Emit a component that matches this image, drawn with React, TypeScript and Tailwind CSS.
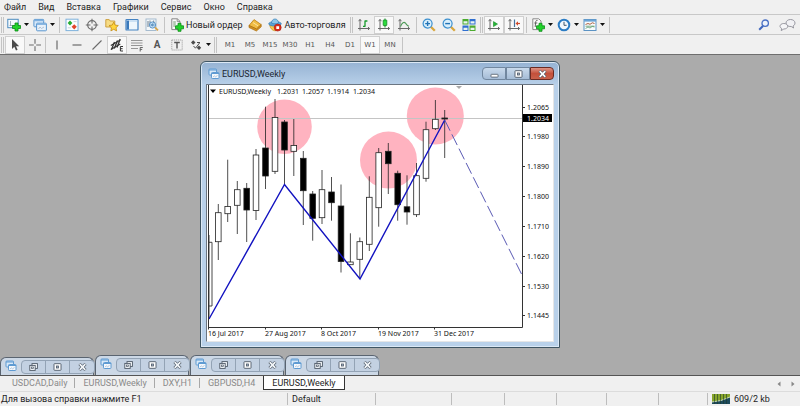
import type { ReactNode } from "react";

/* ---------- icons ---------- */

function Svg({ children, w = 14, h = 14 }: { children: ReactNode; w?: number; h?: number }) {
  return (
    <svg width={w} height={h} viewBox={`0 0 ${w} ${h}`} fill="none" className="shrink-0" aria-hidden="true">
      {children}
    </svg>
  );
}

const GreenPlus = ({ x, y }: { x: number; y: number }) => (
  <path
    transform={`translate(${x} ${y})`}
    d="M3 .5h3V3h2.5v3H6v2.500H3V6H.5V3H3z"
    fill="#22d32b"
    stroke="#0b8a16"
    strokeWidth=".8"
  />
);

const NewChartIcon = () => (
  <Svg>
    <rect x=".8" y="1.3" width="10.4" height="8.4" fill="#f4f9fd" stroke="#4d8cbf" />
    <path d="M2.5 7.5h7M3.5 3v5" stroke="#8a9aa8" strokeWidth=".8" />
    <GreenPlus x={5} y={4.5} />
  </Svg>
);

const ProfilesIcon = () => (
  <Svg>
    <rect x=".9" y="1.4" width="9.8" height="7.4" rx=".8" fill="#d7e8f8" stroke="#5b97d0" />
    <path d="M1 2.4h9.6" stroke="#7fb0df" strokeWidth="1.6" />
    <rect x="3.6" y="5.2" width="9.8" height="7.6" rx=".8" fill="#e8f1fa" stroke="#5b97d0" />
    <path d="M4 6.2h9" stroke="#7fb0df" strokeWidth="1.4" />
    <path d="M5.500 11l1.500-2 1.500 1.500L11 9" stroke="#a4b8cc" strokeWidth=".8" />
  </Svg>
);

const MarketWatchIcon = () => (
  <Svg>
    <rect x="1" y="1.2" width="12" height="11.4" fill="#fbfdff" stroke="#7fb2dc" />
    <path d="M5 2.6L7.4 5 5 7.4 2.6 5z" fill="#27ad34" />
    <path d="M9.2 6.2l2.6 2.6-2.6 2.6-2.6-2.6z" fill="#e2472c" />
    <path d="M8.5 3.6h3M2.8 9.8h3" stroke="#b9c6d2" strokeWidth=".8" />
  </Svg>
);

const DataWindowIcon = () => (
  <Svg>
    <circle cx="7" cy="7" r="4.300" stroke="#6d6d6d" strokeWidth="1.200" />
    <path d="M7 .8v4.700M7 8.500v4.700M.8 7h4.700M8.500 7h4.700" stroke="#6d6d6d" strokeWidth="1.100" />
  </Svg>
);

const NavigatorIcon = () => (
  <Svg>
    <path d="M.8 1.6h3.4l1 1.4h4.6v6H.8z" fill="#f7dc85" stroke="#c99b35" strokeWidth=".9" />
    <path
      d="M8.7 4.2l1.4 2.9 3.2.4-2.3 2.2.6 3.2-2.9-1.6-2.8 1.6.5-3.2L4 7.5l3.2-.4z"
      fill="#ffd43b"
      stroke="#c48d16"
      strokeWidth=".8"
    />
  </Svg>
);

const TerminalIcon = () => (
  <Svg>
    <rect x="1" y="1.5" width="12" height="10.5" rx=".6" fill="#eef6fc" stroke="#4583c2" strokeWidth="1.2" />
    <path d="M1.6 2.5h2.4v9H1.6z" fill="#3a79bb" />
    <path d="M4 3h8.6" stroke="#a9cbea" />
  </Svg>
);

const TesterIcon = () => (
  <Svg>
    <rect x="1" y="1" width="10" height="11.5" fill="#f4f8fb" stroke="#9db5ca" strokeWidth=".9" />
    <path d="M3 3v6M5 2.5V6M8.7 2.5v3" stroke="#6e7e8d" />
    <circle cx="7.5" cy="7" r="3.1" fill="#b9daf5" fillOpacity=".85" stroke="#5b93c6" strokeWidth="1" />
    <path d="M6.3 8V6M7.6 8.4V5.4M8.8 7.8V6.2" stroke="#4078aa" strokeWidth=".8" />
    <path d="M10 9.4l3 3" stroke="#d8a54a" strokeWidth="1.8" />
  </Svg>
);

const OrderIcon = () => (
  <Svg>
    <path d="M1.8.8h5.6L10 3.4v8.2H1.8z" fill="#fafafa" stroke="#7c7c7c" strokeWidth=".9" />
    <path d="M7.2 1v2.6H10" stroke="#7c7c7c" strokeWidth=".8" />
    <path d="M3.2 4h2.6M3.2 6h2.6M3.2 8h2" stroke="#5c8a5c" strokeWidth=".9" />
    <GreenPlus x={5} y={4.8} />
  </Svg>
);

const EditorIcon = () => (
  <Svg>
    <path d="M1 7.5L6 1.6l7.2 5L8.6 11z" fill="#f0bd45" stroke="#b87d17" strokeWidth=".8" />
    <path d="M1 7.5v2l7.4 3.5 4.8-4.2V6.6L8.6 11z" fill="#d6941f" stroke="#a66b10" strokeWidth=".7" />
    <path d="M5 4.6l5 3.2" stroke="#fbe39d" />
  </Svg>
);

const AutoTradeIcon = () => (
  <Svg>
    <path d="M1.6 7.2c1 3.6 3 5.6 5.5 5.6 2.6 0 4.6-2.6 5.2-5.6z" fill="#f5c94d" stroke="#c9932a" strokeWidth=".7" />
    <ellipse cx="7" cy="5.8" rx="6.3" ry="2.3" fill="#5da3d6" stroke="#357cb4" strokeWidth=".7" />
    <path d="M3.4 5C3.8 2.2 5.2 1 7 1s3.2 1.2 3.6 4c-2 1.1-5.2 1.1-7.2 0z" fill="#8cc6ea" stroke="#357cb4" strokeWidth=".7" />
    <circle cx="9.7" cy="9.6" r="3.5" fill="#da2d1b" stroke="#a91c10" strokeWidth=".6" />
    <rect x="8.3" y="8.2" width="2.8" height="2.8" fill="#fff" />
  </Svg>
);

const Axes = () => (
  <path
    d="M3 1.5v11M1 10.5h11.5M1.6 3.2L3 1.4l1.4 1.8M11 9.1l1.6 1.4-1.6 1.4"
    stroke="#686868"
    strokeWidth="1"
  />
);

const BarsIcon = () => (
  <Svg>
    <Axes />
    <path d="M8 2.500v6.300M8 3h2.400M6 8.300h2" stroke="#169a2b" strokeWidth="1.300" />
  </Svg>
);

const CandlesIcon = () => (
  <Svg>
    <Axes />
    <path d="M8 .5v9" stroke="#148a24" />
    <rect x="6.2" y="2" width="3.6" height="5.6" rx=".5" fill="#2bdc3c" stroke="#148a24" strokeWidth=".8" />
  </Svg>
);

const LineIcon = () => (
  <Svg>
    <Axes />
    <path d="M3.500 8.500C5 4.500 7 3.500 8.500 5.200S10.500 8 12 8.300" stroke="#4d9a57" strokeWidth="1.100" />
  </Svg>
);

const ZoomIcon = ({ plus }: { plus?: boolean }) => (
  <Svg>
    <path d="M8.800 8.800l4 4" stroke="#d9a63c" strokeWidth="2.300" />
    <circle cx="5.600" cy="5.600" r="4.500" fill="#d9effc" stroke="#3b8fce" strokeWidth="1.200" />
    <path d={plus ? "M3.200 5.600H8M5.600 3.200V8" : "M3.200 5.600H8"} stroke="#2273b5" strokeWidth="1.400" />
  </Svg>
);

const TileIcon = () => (
  <Svg>
    <rect x=".5" y="1" width="6" height="5.500" fill="#4cab2f" />
    <rect x="7.500" y="1" width="6" height="5.500" fill="#2f6fd0" />
    <rect x=".5" y="7.500" width="6" height="5.500" fill="#2f6fd0" />
    <rect x="7.500" y="7.500" width="6" height="5.500" fill="#4cab2f" />
    <path d="M1.500 3.200h4v2.300h-4zM8.500 3.200h4v2.300h-4zM1.500 9.700h4V12h-4zM8.500 9.700h4V12h-4z" fill="#e9f5ef" />
  </Svg>
);

const AutoScrollIcon = () => (
  <Svg>
    <Axes />
    <path d="M6.500 3.600v5l4-2.500z" fill="#25b737" stroke="#148a24" strokeWidth=".6" />
  </Svg>
);

const ShiftIcon = () => (
  <Svg>
    <Axes />
    <path d="M7.500 1.500v7.500" stroke="#45719c" strokeWidth="1.200" />
    <path d="M8.500 5.500l2.500-2.200v4.400z" fill="#cf4a2a" />
    <path d="M10.500 5.500H13" stroke="#cf4a2a" strokeWidth="1.200" />
  </Svg>
);

const IndicatorsIcon = () => (
  <Svg>
    <path d="M1.800.8h6L10 3v8.600H1.800z" fill="#fafafa" stroke="#808080" strokeWidth=".9" />
    <path d="M6.500 2.500c-1.500-.4-1.800.7-1.900 2L4.200 9M3.300 5h3" stroke="#555" strokeWidth=".9" />
    <GreenPlus x={5} y={4.800} />
  </Svg>
);

const ClockIcon = () => (
  <Svg>
    <circle cx="7" cy="7" r="5.300" fill="#f1f8fd" stroke="#2a7cc4" strokeWidth="2" />
    <path d="M7 3.800V7.300h2.600" stroke="#42566a" strokeWidth="1" />
  </Svg>
);

const TemplateIcon = () => (
  <Svg>
    <rect x="1" y="1.500" width="12" height="11" fill="#f8fbfd" stroke="#5c93c4" />
    <path d="M1 2.600h12" stroke="#6ba4d6" strokeWidth="2" />
    <path d="M2.500 6.500l2.500-1 2 .8 2.300-1.500 2.200.7" stroke="#a3502c" strokeWidth=".9" />
    <path d="M2.500 10.500l2.500-1.500 2 1 2.300-1.600 2.200.6M2.500 8.200h9" stroke="#5a9a6c" strokeWidth=".8" />
  </Svg>
);

const SearchIcon = () => (
  <Svg>
    <path d="M6 8L2.200 11.800" stroke="#3f66bd" strokeWidth="2" />
    <circle cx="8.200" cy="5.200" r="3.200" fill="#eef3fb" stroke="#4a70c4" strokeWidth="1.300" />
  </Svg>
);

const ChatIcon = () => (
  <Svg w={17} h={14}>
    <path
      d="M7 5c0-2 2-3.500 4.500-3.500S16 3 16 5c0 1.400-.8 2.400-2 3l.6 2-2.400-1.500C9.300 8.800 7 7.200 7 5z"
      fill="#f1f1f4"
      stroke="#8d8d97"
      strokeWidth=".9"
    />
    <path
      d="M1 8.300C1 6.600 2.700 5.500 4.800 5.500s3.900 1.100 3.900 2.800S7 11 4.800 11l-2.600 1.600.5-2.200C1.600 10 1 9.200 1 8.300z"
      fill="#f6f6f8"
      stroke="#8d8d97"
      strokeWidth=".9"
    />
  </Svg>
);

const CursorIcon = () => (
  <Svg>
    <path d="M4 1v10l2.300-2.200L8 12.500l1.600-.8L8 8.200h3.200z" fill="#4b4b4b" />
  </Svg>
);

const CrosshairIcon = () => (
  <Svg>
    <path d="M7 1v4.800M7 8.200V13M1 7h4.800M8.200 7H13" stroke="#6b6b6b" strokeWidth="1.100" />
  </Svg>
);

const VLineIcon = () => (
  <Svg>
    <path d="M7 2.500v9" stroke="#6b6b6b" strokeWidth="1.200" />
  </Svg>
);

const HLineIcon = () => (
  <Svg>
    <path d="M2.500 7h9" stroke="#6b6b6b" strokeWidth="1.200" />
  </Svg>
);

const TrendIcon = () => (
  <Svg>
    <path d="M2.500 11.500l9-9" stroke="#6b6b6b" strokeWidth="1.100" />
  </Svg>
);

const ChannelIcon = () => (
  <Svg>
    <path d="M.8 7.500l9.500-5.500M.8 11.500l9.500-5.500" stroke="#333" strokeWidth="1.200" />
    <path d="M1.500 11.500l3-7.500M4.300 10.500L7.500 2.500M7 9.500L10.200 1" stroke="#333" strokeWidth="1.300" />
    <path d="M13 8.500h-2.600V13H13M10.400 10.700h2.200" stroke="#333" />
  </Svg>
);

const FiboIcon = () => (
  <Svg>
    <path d="M1 2.500h11.500M1 5h11.500M1 7.500h11.500M1 10.500h7" stroke="#8a8a8a" strokeWidth=".9" />
    <path d="M12.800 9.500h-2.600v4M10.200 11.400h2" stroke="#555" strokeWidth=".9" />
  </Svg>
);

const LabelIcon = () => (
  <Svg>
    <rect x="1.800" y="2" width="10.400" height="10" stroke="#8c8c8c" strokeWidth=".9" strokeDasharray="1 1" />
    <path d="M4.200 4.500h5.600M7 4.500v6" stroke="#555" strokeWidth="1.400" />
  </Svg>
);

const ArrowsIcon = () => (
  <Svg>
    <path d="M4.200 2.200L6.500 4.500 4.200 6.800 2 4.500z" fill="#4b4b4b" />
    <path d="M10 7.600l2.200 2.200L10 12 7.800 9.800z" fill="#4b4b4b" />
    <path d="M4.500 8l2 2.200L10.500 5M8 4.500h3" stroke="#4b4b4b" strokeWidth="1" />
  </Svg>
);

const Caret = () => (
  <svg width="5" height="3" viewBox="0 0 5 3" className="shrink-0" aria-hidden="true">
    <path d="M0 0h5L2.500 3z" fill="#111" />
  </svg>
);

const SignalIcon = () => (
  <Svg w={18} h={10}>
    <rect width="18" height="10" fill="#1e4a5c" />
    <path d="M0 0h18v3L9 6.500 0 8z" fill="#87a52c" />
    <path d="M0 8l9-1.500L18 3" stroke="#d6e4c4" strokeWidth=".9" />
    <path d="M2.500 0v10M5.500 0v10M8.500 0v10M11.500 0v10M14.500 0v10" stroke="#1d3a2c" strokeWidth=".6" />
  </Svg>
);

/* ---------- toolbar parts ---------- */

const Grip = () => <span className="mx-px h-4 w-[3px] shrink-0 border-x border-x-[#c4c4c4]" />;
const Separator = () => <span className="mx-0.5 h-4 w-px shrink-0 bg-[#c4c4c4]" />;

interface ToolProps {
  label: string;
  children: ReactNode;
  active?: boolean;
  menu?: boolean;
}

function Tool({ label, children, active, menu }: ToolProps) {
  return (
    <button
      aria-label={label}
      className={`flex h-[18px] shrink-0 items-center justify-center gap-[3px] ${menu ? "w-[26px]" : "w-5"} ${
        active ? "border border-[#d0d0d0] bg-[#f9f9f9]" : ""
      }`}
    >
      {children}
      {menu && <Caret />}
    </button>
  );
}

const MENU = ["Файл", "Вид", "Вставка", "Графики", "Сервис", "Окно", "Справка"];
const PERIODS = ["M1", "M5", "M15", "M30", "H1", "H4", "D1", "W1", "MN"];
const CHART_TABS = ["USDCAD,Daily", "EURUSD,Weekly", "DXY,H1", "GBPUSD,H4", "EURUSD,Weekly"];

function MainToolbar() {
  return (
    <div className="flex h-5 items-center border-t border-[#c8c8c8] pr-1">
      <Grip />
      <Tool label="Новый график" menu><NewChartIcon /></Tool>
      <Tool label="Профили" menu><ProfilesIcon /></Tool>
      <Separator />
      <Tool label="Обзор рынка"><MarketWatchIcon /></Tool>
      <Tool label="Окно данных"><DataWindowIcon /></Tool>
      <Tool label="Навигатор"><NavigatorIcon /></Tool>
      <Tool label="Терминал"><TerminalIcon /></Tool>
      <Tool label="Тестер стратегий"><TesterIcon /></Tool>
      <Separator />
      <button className="flex items-center gap-0.5 px-[3px]">
        <OrderIcon />
        Новый ордер
      </button>
      <Tool label="Редактор"><EditorIcon /></Tool>
      <button className="flex items-center gap-0.5 px-[3px]">
        <AutoTradeIcon />
        Авто-торговля
      </button>
      <Grip />
      <Tool label="Бары"><BarsIcon /></Tool>
      <Tool label="Японские свечи" active><CandlesIcon /></Tool>
      <Tool label="Линия"><LineIcon /></Tool>
      <Separator />
      <Tool label="Увеличить"><ZoomIcon plus /></Tool>
      <Tool label="Уменьшить"><ZoomIcon /></Tool>
      <Tool label="Окна мозаикой"><TileIcon /></Tool>
      <Grip />
      <Tool label="Автопрокрутка" active><AutoScrollIcon /></Tool>
      <Tool label="Сдвиг графика" active><ShiftIcon /></Tool>
      <Separator />
      <Tool label="Индикаторы" menu><IndicatorsIcon /></Tool>
      <Tool label="Периоды" menu><ClockIcon /></Tool>
      <Tool label="Шаблоны" menu><TemplateIcon /></Tool>
      <Separator />
      <div className="ml-auto flex items-center gap-2">
        <button aria-label="Поиск"><SearchIcon /></button>
        <button aria-label="Чат"><ChatIcon /></button>
      </div>
    </div>
  );
}

function DrawToolbar() {
  return (
    <div className="flex h-5 items-center border-t border-[#c8c8c8]">
      <Grip />
      <Tool label="Курсор" active><CursorIcon /></Tool>
      <Tool label="Перекрестие"><CrosshairIcon /></Tool>
      <span className="h-4 w-0.5 shrink-0 border-l border-[#c4c4c4]" />
      <Tool label="Вертикальная линия"><VLineIcon /></Tool>
      <Tool label="Горизонтальная линия"><HLineIcon /></Tool>
      <Tool label="Трендовая линия"><TrendIcon /></Tool>
      <Tool label="Канал" active><ChannelIcon /></Tool>
      <Tool label="Фибоначчи"><FiboIcon /></Tool>
      <Tool label="Текст">
        <span className="text-[10px] font-bold text-[#555]">A</span>
      </Tool>
      <Tool label="Метка"><LabelIcon /></Tool>
      <Tool label="Стрелки" menu><ArrowsIcon /></Tool>
      <Grip />
      <div className="flex px-0.5">
        {PERIODS.map((p) => (
          <button
            key={p}
            className={`h-[18px] w-5 shrink-0 text-center font-['DejaVu_Sans'] text-[7px] text-[#555] ${
              p === "W1" ? "border border-[#d0d0d0] bg-[#f9f9f9]" : ""
            }`}
          >
            {p}
          </button>
        ))}
      </div>
      <span className="h-4 w-px bg-[#c4c4c4]" />
    </div>
  );
}

/* ---------- chart ---------- */

// x, high, low, body top, body bottom, filled
type Candle = [number, number, number, number, number, boolean];

const CANDLES: Candle[] = [
  [218.3, 204, 260, 212.7, 241.7, false],
  [227.7, 159.7, 222, 206.5, 213.7, false],
  [237.3, 181, 234, 189.7, 205.3, false],
  [246.7, 183, 242, 188.3, 210, true],
  [256, 149, 220, 155, 210.5, false],
  [265.5, 106.7, 189, 148, 176, true],
  [275, 99, 174, 117.5, 171.3, false],
  [284.5, 120, 185, 122, 150, true],
  [293.8, 119, 176, 145.5, 151.3, false],
  [303.3, 151, 225, 158.3, 190.7, true],
  [312.7, 191, 240.7, 194, 218.3, true],
  [322, 170, 224, 189.7, 217.7, false],
  [331.5, 177, 220.7, 192, 202.7, true],
  [341, 184.5, 272.5, 206, 261.5, true],
  [350.4, 233.3, 265, 262, 264.7, false],
  [359.8, 237.5, 279, 241.7, 259.3, false],
  [369.3, 176.3, 251, 197.3, 244.3, false],
  [378.7, 148, 226.7, 152.7, 207.7, false],
  [388.3, 143, 194, 151.3, 163.7, true],
  [397.7, 170.7, 220.7, 173.3, 204.7, true],
  [407, 175.3, 224.7, 206.8, 212, true],
  [416.5, 163, 217, 175.7, 214.7, false],
  [426, 121.7, 181.7, 129.7, 178.3, false],
  [435.4, 100, 130, 119.3, 128.7, false],
  [444.7, 110, 158, 118, 119, true],
];

const PRICES: [number, string][] = [
  [107, "1.2065"],
  [136, "1.1980"],
  [166, "1.1890"],
  [196, "1.1800"],
  [226, "1.1710"],
  [256, "1.1620"],
  [286, "1.1530"],
  [315, "1.1445"],
];

const DATES: [number, string][] = [
  [208, "16 Jul 2017"],
  [265, "27 Aug 2017"],
  [321, "8 Oct 2017"],
  [378, "19 Nov 2017"],
  [434, "31 Dec 2017"],
];

const QUOTES: [number, string][] = [
  [277, "1.2031"],
  [302, "1.2057"],
  [327, "1.1914"],
  [353, "1.2034"],
];

function Chart() {
  return (
    <svg viewBox="207 85 346 256" className="block w-full bg-white font-['Noto_Sans',sans-serif] text-[7px]">
      <circle cx="284.5" cy="126.7" r="27.3" fill="#ffb3c0" />
      <circle cx="388.5" cy="160" r="28.5" fill="#ffb3c0" />
      <circle cx="435.3" cy="116" r="28.5" fill="#ffb3c0" />
      <path d="M208 118.5h314" stroke="#c4c4c4" />
      <path d="M456 86h6l-3 3z" fill="#a8a8a8" />

      <path d="M209 235v83M208.5 242.3h3.5V306h-3.5" stroke="#333" fill="none" strokeWidth=".9" />
      {CANDLES.map(([x, high, low, top, bottom, filled]) => (
        <g key={x} stroke="#222">
          <path d={`M${x} ${high}V${low}`} strokeWidth=".8" />
          <rect x={x - 2.8} y={top} width={5.6} height={bottom - top} fill={filled ? "#000" : "#fff"} strokeWidth=".8" />
        </g>
      ))}

      <path d="M209 319l75.5-134.5L360 279l84.7-159" stroke="#1212c0" strokeWidth="1.4" fill="none" />
      <path d="M444.7 120L522 275" stroke="#5a5ab4" strokeWidth="1" strokeDasharray="12 4" fill="none" />

      <path d="M208.5 85v242.500h314V85" stroke="#333" fill="none" />
      {PRICES.map(([y, label]) => (
        <g key={label}>
          <path d={`M522 ${y + 0.5}h3`} stroke="#333" />
          <text x="527" y={y + 3} fill="#111">{label}</text>
        </g>
      ))}
      <rect x="523" y="114" width="29" height="8" fill="#000" />
      <text x="527" y="121" fill="#fff">1.2034</text>

      {DATES.map(([x, label]) => (
        <g key={label}>
          <path d={`M${x + 0.5} 327v2.5`} stroke="#333" />
          <text x={x} y="336" fill="#111">{label}</text>
        </g>
      ))}

      <path d="M210 89.500h6l-3 3.500z" fill="#000" />
      <text x="219" y="94" fill="#111">EURUSD,Weekly</text>
      {QUOTES.map(([x, q]) => (
        <text key={x} x={x} y="94" fill="#111">{q}</text>
      ))}
    </svg>
  );
}

/* ---------- windows ---------- */

const WindowIcon = () => (
  <Svg w={12} h={12}>
    <rect x="1" y="1" width="7.5" height="6" rx=".8" fill="#d9e9f8" stroke="#5f9bd2" />
    <path d="M1 2h7.5" stroke="#5f9bd2" />
    <rect x="3.5" y="4.5" width="7.5" height="6" rx=".8" fill="#f4f8fc" stroke="#5f9bd2" />
    <path d="M3.5 5.5H11" stroke="#5f9bd2" />
    <path d="M5 9.2l1.3-1.4 1.2 1L9.5 7.5" stroke="#9fb9d2" strokeWidth=".8" />
  </Svg>
);

const CloseGlyph = ({ fill = "#fff" }: { fill?: string }) => (
  <Svg w={9} h={8}>
    <path d="M1.5 1l6 6M7.5 1l-6 6" stroke="#4d5866" strokeWidth="3" />
    <path d="M1.7 1.2l5.6 5.6M7.3 1.200l-5.6 5.600" stroke={fill} strokeWidth="1.700" />
  </Svg>
);

const MaximizeGlyph = () => (
  <Svg w={9} h={8}>
    <rect x="1" y=".7" width="7" height="6.600" rx=".6" fill="#fff" stroke="#4d5866" strokeWidth=".9" />
    <rect x="3.500" y="3" width="2" height="2" fill="#aebdcf" stroke="#4d5866" strokeWidth=".8" />
  </Svg>
);

const RestoreGlyph = () => (
  <Svg w={9} h={8}>
    <rect x="3" y=".6" width="5.4" height="4.8" fill="#f4f7fa" stroke="#4d5866" strokeWidth=".9" />
    <rect x=".8" y="2.4" width="5.4" height="5" fill="#f4f7fa" stroke="#4d5866" strokeWidth=".9" />
    <rect x="2.6" y="4" width="1.8" height="1.6" stroke="#4d5866" strokeWidth=".7" />
  </Svg>
);

const MinimizeGlyph = () => (
  <Svg w={9} h={8}>
    <rect x="1" y="4.300" width="7" height="2.800" rx=".6" fill="#fff" stroke="#4d5866" strokeWidth=".8" />
  </Svg>
);

function ChartWindow() {
  return (
    <section className="absolute top-1.5 left-[200px] w-[360px] rounded-t-md border border-[#3f5563] bg-[#b9d1ea] px-[5px] pb-[5px] shadow-[inset_0_0_0_1px_#dbe8f5]">
      <header className="-mx-1 mt-px flex h-[21px] items-center rounded-t-sm bg-linear-to-b from-[#97b4d4] to-[#b7cfe8] pr-1 pl-1.5">
        <WindowIcon />
        <h1 className="ml-0.5 text-[#1c2733]">EURUSD,Weekly</h1>
        <div className="ml-auto flex">
          <button
            aria-label="Свернуть"
            className="flex h-[13px] w-6 items-center justify-center rounded-l-sm border border-[#71879f] bg-linear-to-b from-[#c9daec] to-[#a5bcd6]"
          >
            <MinimizeGlyph />
          </button>
          <button
            aria-label="Развернуть"
            className="flex h-[13px] w-6 items-center justify-center border border-[#71879f] bg-linear-to-b from-[#c9daec] to-[#a5bcd6]"
          >
            <MaximizeGlyph />
          </button>
          <button
            aria-label="Закрыть"
            className="flex h-[13px] w-6 items-center justify-center rounded-r-sm border border-[#6b2a22] bg-linear-to-b from-[#dd9385] via-[#c4503b] to-[#c9604a]"
          >
            <CloseGlyph />
          </button>
        </div>
      </header>
      <div className="border border-[#6b7682] border-r-[#e6e6e6] border-b-[#e6e6e6]">
        <Chart />
      </div>
    </section>
  );
}

function MinimizedWindow({ first }: { first: boolean }) {
  return (
    <div
      className={`flex w-[94px] items-start rounded-t-md border border-b-0 border-[#5a6470] bg-[#ccd8e6] px-px pt-0.5 pl-1 ${
        first ? "h-[18px]" : "h-5"
      }`}
    >
      <WindowIcon />
      <span className="mx-0.5 mt-1 h-1 w-px bg-[#67727e]" />
      <div className="ml-auto flex divide-x divide-[#93a3b5] rounded-sm border border-[#93a3b5] bg-[#c3d1e2]">
        <button aria-label="Восстановить" className="flex h-3 w-6 items-center justify-center"><RestoreGlyph /></button>
        <button aria-label="Развернуть" className="flex h-3 w-6 items-center justify-center"><MaximizeGlyph /></button>
        <button aria-label="Закрыть" className="flex h-3 w-6 items-center justify-center"><CloseGlyph fill="#f4f7fa" /></button>
      </div>
    </div>
  );
}

export default function App() {
  return (
    <div className="flex min-h-screen flex-col bg-[#f0f0f0] font-['Roboto','Noto_Sans',sans-serif] text-[9px] leading-3 text-[#1e1e1e]">
      <nav className="flex h-3.5 items-center gap-3 pl-1">
        {MENU.map((item) => (
          <button key={item}>{item}</button>
        ))}
      </nav>
      <MainToolbar />
      <DrawToolbar />

      <main className="relative flex-1 overflow-hidden border-t border-[#6e6e6e] bg-[#ababab]">
        <ChartWindow />
        <div className="absolute bottom-0 left-0 flex items-end gap-px">
          {[0, 1, 2, 3].map((i) => (
            <MinimizedWindow key={i} first={i === 0} />
          ))}
        </div>
      </main>

      <div className="flex h-4 items-start border-t border-[#555] pl-1">
        {CHART_TABS.map((tab, i) => {
          const active = i === CHART_TABS.length - 1;
          return (
            <button
              key={i}
              className={`relative h-3.5 px-2 ${
                active
                  ? "border border-t-0 border-[#333] bg-white"
                  : "text-[#8a8a8a] after:absolute after:top-0.5 after:right-0 after:h-2.5 after:w-px after:bg-[#a8a8a8] nth-[4]:after:hidden"
              }`}
            >
              {tab}
            </button>
          );
        })}
        <div className="ml-auto flex gap-2 self-center pr-1">
          <button aria-label="Назад">
            <Svg w={6} h={6}><path d="M4.500 .5v5L1.500 3z" fill="#888" /></Svg>
          </button>
          <button aria-label="Вперёд">
            <Svg w={6} h={6}><path d="M1.500 .5v5l3-2.500z" fill="#888" /></Svg>
          </button>
        </div>
      </div>

      <footer className="flex h-[15px] items-center divide-x divide-[#bdbdbd] border-t border-[#dcdcdc]">
        <span className="flex-1 pl-px">Для вызова справки нажмите F1</span>
        <span className="w-[88px] pl-1">Default</span>
        <span className="h-3 w-[76px]" />
        <span className="h-3 w-[53px]" />
        <span className="h-3 w-[52px]" />
        <span className="h-3 w-[50px]" />
        <span className="h-3 w-[52px]" />
        <span className="h-3 w-[49px]" />
        <span className="flex w-[92px] items-center gap-1 pl-1">
          <SignalIcon />
          609/2 kb
        </span>
      </footer>
    </div>
  );
}
